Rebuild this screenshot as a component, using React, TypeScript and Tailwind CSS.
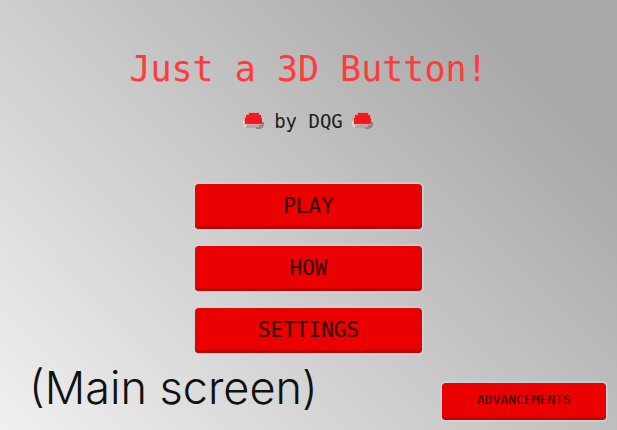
import React from "react";

function MiniButton() {
  return (
    <svg width="24" height="20" viewBox="0 0 24 20" aria-hidden="true">
      <path d="M2 13h4v3h-4z" fill="#dedede" />
      <path d="M1 10h3v4h-3z" fill="#e2dcdc" />
      <path d="M4 14h17v3h-17z" fill="#acacac" />
      <path d="M20 11h2v4h-1v2h-2v1h-5v-2h3v-2h3z" fill="#8b8b8b" />
      <path d="M6 1h12v3h2v10h-18v-9h2v-2h2z" fill="#f08a8a" opacity="0.5" />
      <path d="M7 2h10v2h2v3h1v6h-17v-6h1v-3h3z" fill="#f31a1e" />
    </svg>
  );
}

function MenuButton({ label, small = false }: { label: string; small?: boolean }) {
  const size = small
    ? "h-[37px] w-[164px] pb-1 text-[13px]"
    : "h-[45px] w-[227px] pb-px text-[21px]";
  return (
    <button
      type="button"
      className={`${size} flex items-center justify-center rounded-[4px] bg-[#eb0000] leading-none text-[#2b0000] shadow-[inset_0_-3px_1px_#c60000,0_0_1px_2px_rgba(200,218,218,0.6)]`}
    >
      {label}
    </button>
  );
}

export default function App() {
  return (
    <main className="flex min-h-screen flex-col bg-[linear-gradient(45deg,#f0f0f0,#a9a9a9_84%)] font-['DejaVu_Sans_Mono',monospace]">
      <header className="flex flex-col items-center pt-[49px]">
        <h1 className="text-[35px] leading-[40px] text-[#ff3b3b]">Just a 3D Button!</h1>
        <p className="mt-5 flex items-center gap-2 text-[19px] leading-[24px] text-[#222222]">
          <MiniButton />
          by DQG
          <MiniButton />
        </p>
      </header>
      <nav className="mt-[51px] flex flex-col items-center gap-[17px]">
        <MenuButton label="PLAY" />
        <MenuButton label="HOW" />
        <MenuButton label="SETTINGS" />
      </nav>
      <footer className="mt-auto flex items-end justify-between pr-[11px] pb-[10px] pl-[29px]">
        <p className="pb-2 font-['Inter',sans-serif] text-[45px] leading-[48px] font-light text-[#111111]">
          (Main screen)
        </p>
        <MenuButton label="ADVANCEMENTS" small />
      </footer>
    </main>
  );
}
